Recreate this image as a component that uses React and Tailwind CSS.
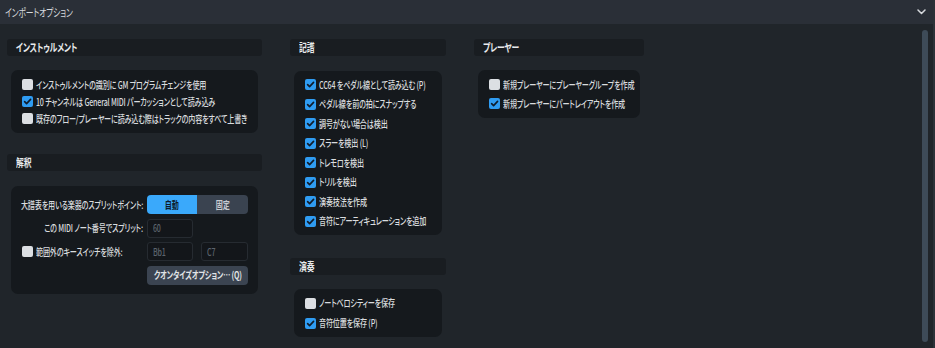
import React from 'react';

const font = "[font-family:'Noto_Sans_CJK_JP','Noto_Sans',sans-serif] [font-feature-settings:'palt']";

// Meiryo UI style narrow text: Noto CJK squeezed horizontally
function T({ children, className = '', o = 'origin-left' }) {
  return (
    <span className={`inline-block whitespace-nowrap leading-none tracking-[-0.25px] scale-x-[0.71] ${o} ${className}`}>
      {children}
    </span>
  );
}

function Box({ checked }) {
  return checked ? (
    <span className="w-[11px] h-[11px] rounded-[2px] bg-[#2f9cf2] flex items-center justify-center shrink-0">
      <svg width="9" height="9" viewBox="0 0 10 10" fill="none">
        <path d="M1.8 5.2 L4 7.4 L8.4 2.6" stroke="#0f1c2c" strokeWidth="1.8" strokeLinecap="round" strokeLinejoin="round" />
      </svg>
    </span>
  ) : (
    <span className="w-[11px] h-[11px] rounded-[2px] bg-[#dcdfe3] shrink-0" />
  );
}

function Row({ checked, label, h }) {
  return (
    <div className={`flex items-center gap-[3px] ${h}`}>
      <Box checked={checked} />
      <T className="text-[10px] font-medium text-[#d9dcdf]">{label}</T>
    </div>
  );
}

function Section({ title, children, className = '' }) {
  return (
    <div className={className}>
      <div className="h-[17px] bg-[#191d21] rounded-[3px] flex items-center pl-[9px]">
        <T className="text-[11px] font-bold text-[#e8eaec]">{title}</T>
      </div>
      {children}
    </div>
  );
}

function Card({ children, className = '' }) {
  return <div className={`mx-[4px] mt-[14px] bg-[#15191d] rounded-[7px] ${className}`}>{children}</div>;
}

function Field({ value, w }) {
  return (
    <div className={`${w} h-[19px] bg-[#13161a] border border-[#262b31] rounded-[3px] flex items-center pl-[5px]`}>
      <T className="text-[10px] font-medium text-[#5c646d]">{value}</T>
    </div>
  );
}

function Label({ children }) {
  return (
    <div className="flex justify-end">
      <T o="origin-right" className="text-[10px] font-medium text-[#d9dcdf]">{children}</T>
    </div>
  );
}

export default function App() {
  return (
    <div className={`w-[935px] h-[348px] bg-[#20252a] flex flex-col overflow-hidden border-r-2 border-[#2c3238] ${font}`}>
      <div className="h-[24px] bg-[#2a2f37] flex items-center justify-between pl-[5px] pr-[7px] shrink-0">
        <T className="text-[11px] text-[#d6d9dd]">インポートオプション</T>
        <svg width="9" height="6" viewBox="0 0 9 6" fill="none">
          <path d="M1 1 L4.5 4.5 L8 1" stroke="#d6d9dd" strokeWidth="1.5" strokeLinecap="round" strokeLinejoin="round" />
        </svg>
      </div>
      <div className="flex-1 flex">
        <div className="flex-1 flex gap-[28px] pl-[7px] pt-[15px]">
          <div className="w-[255px]">
            <Section title="インストゥルメント">
              <Card className="py-[6px] pl-[11px]">
                <Row h="h-[17px]" label="インストゥルメントの識別に GM プログラムチェンジを使用" />
                <Row h="h-[17px]" checked label="10 チャンネルは General MIDI パーカッションとして読み込み" />
                <Row h="h-[17px]" label="既存のフロー/プレーヤーに読み込む際はトラックの内容をすべて上書き" />
              </Card>
            </Section>
            <Section title="解釈" className="mt-[21px]">
              <Card className="mt-[15px] py-[9px] px-[9px] grid grid-cols-[123px_101px] gap-x-[4px] gap-y-[4.5px] items-center">
                <Label>大譜表を用いる楽器のスプリットポイント:</Label>
                <div className="h-[19px] flex rounded-[4px] overflow-hidden">
                  <div className="w-[50px] bg-[#3aa9fb] flex items-center justify-center">
                    <T o="origin-center" className="text-[10px] font-bold text-[#0d1a2a]">自動</T>
                  </div>
                  <div className="flex-1 bg-[#3a4350] flex items-center justify-center">
                    <T o="origin-center" className="text-[10px] font-bold text-[#c8ccd2]">固定</T>
                  </div>
                </div>
                <Label>この MIDI ノート番号でスプリット:</Label>
                <Field value="60" w="w-[46px]" />
                <div className="flex items-center gap-[3px] pl-[2px]">
                  <Box />
                  <T className="text-[10px] font-medium text-[#d9dcdf]">範囲外のキースイッチを除外:</T>
                </div>
                <div className="flex gap-[8px]">
                  <Field value="Bb1" w="w-[46px]" />
                  <Field value="C7" w="w-[47px]" />
                </div>
                <span />
                <div className="h-[19px] bg-[#3b4451] rounded-[4px] flex items-center justify-center">
                  <T o="origin-center" className="text-[10px] font-bold text-[#e0e3e6]">クオンタイズオプション… (Q)</T>
                </div>
              </Card>
            </Section>
          </div>
          <div className="w-[156px]">
            <Section title="記譜">
              <Card className="mt-[15px] py-[4px] pl-[11px]">
                <Row h="h-[19.5px]" checked label="CC64 をペダル線として読み込む (P)" />
                <Row h="h-[19.5px]" checked label="ペダル線を前の拍にスナップする" />
                <Row h="h-[19.5px]" checked label="調号がない場合は検出" />
                <Row h="h-[19.5px]" checked label="スラーを検出 (L)" />
                <Row h="h-[19.5px]" checked label="トレモロを検出" />
                <Row h="h-[19.5px]" checked label="トリルを検出" />
                <Row h="h-[19.5px]" checked label="演奏技法を作成" />
                <Row h="h-[19.5px]" checked label="音符にアーティキュレーションを追加" />
              </Card>
            </Section>
            <Section title="演奏" className="mt-[23px]">
              <Card className="py-[4px] pl-[11px]">
                <Row h="h-[20px]" label="ノートベロシティーを保存" />
                <Row h="h-[20px]" checked label="音符位置を保存 (P)" />
              </Card>
            </Section>
          </div>
          <div className="w-[170px]">
            <Section title="プレーヤー">
              <Card className="py-[5px] pl-[11px]">
                <Row h="h-[19px]" label="新規プレーヤーにプレーヤーグループを作成" />
                <Row h="h-[19px]" checked label="新規プレーヤーにパートレイアウトを作成" />
              </Card>
            </Section>
          </div>
        </div>
        <div className="w-[6px] my-[6px] mr-[5px] rounded-full bg-[#3e4b58]" />
      </div>
    </div>
  );
}
